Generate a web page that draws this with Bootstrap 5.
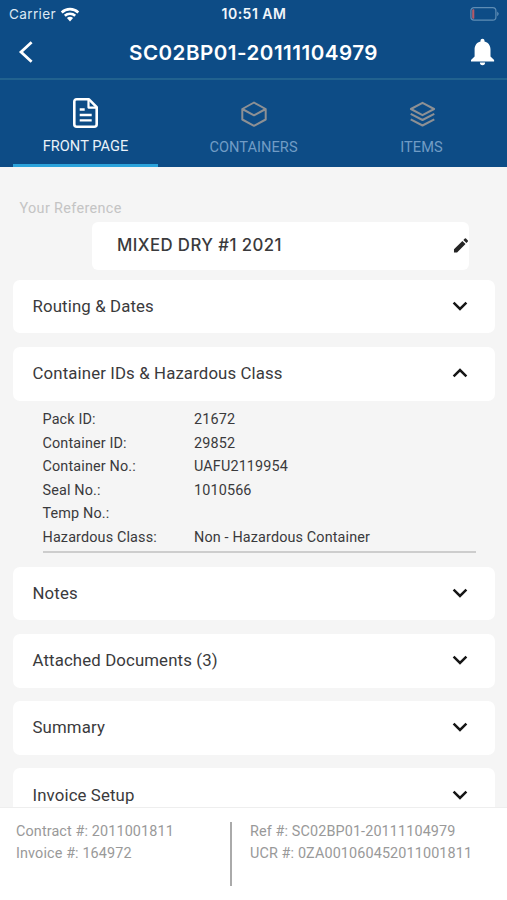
<!DOCTYPE html>
<html lang="en">
<head>
<meta charset="utf-8">
<meta name="viewport" content="width=device-width, initial-scale=1">
<title>SC02BP01-20111104979</title>
<link href="https://cdn.jsdelivr.net/npm/bootstrap@5.3.0/dist/css/bootstrap.min.css" rel="stylesheet">
<style>
  body { font-family: Roboto, "Liberation Sans", sans-serif; color: #3a3a3c; background: #f5f5f5; line-height: 1.2; }
  svg { display: block; flex: none; }
  .screen { height: 900px; }
  .ios { font-family: Inter, "Liberation Sans", sans-serif; }
  .top-area { background: #0d4c86; color: #fff; height: 167px; flex: none; }
  .status-line { height: 28px; padding: 0 8px 0 9px; }
  .status-line > * { flex: 1 1 0; }
  .carrier { font-size: 13.6px; letter-spacing: .35px; color: #dce8f3; }
  .clock { font-size: 14px; font-weight: 600; letter-spacing: .5px; color: #f1f6fa; }
  .title-bar { height: 52px; padding: 0 12px 3px 18px; border-bottom: 2px solid #21628f; }
  .page-title { font-size: 20.6px; font-weight: 600; letter-spacing: .48px; padding: 3px 0 0 3px; }
  .tab-row { height: 87px; padding: 0 13px; }
  .tab-item { width: 145px; padding-top: 17px; border-bottom: 3px solid transparent; font-size: 14.6px; letter-spacing: .05px; color: #719cc5; }
  .tab-item.current { color: #e9f2f9; border-color: #2ba3db; }
  .tab-item svg { height: 32px; margin-bottom: 10px; }
  .tab-item.current svg { margin-bottom: 9px; }
  .content-area { padding: 34px 12.5px 0 13px; min-height: 0; }
  .ref-label { flex: none; font-size: 14.4px; letter-spacing: .35px; color: #c4c4c4; padding-left: 6.5px; height: 20.5px; line-height: 16px; }
  .ref-field { margin: 0 26px 10.3px 79px; height: 48px; padding: 0 0 0 25px; border-radius: 6px; font-size: 16.8px; font-weight: 500; color: #3a3a3c; letter-spacing: .42px; }
  .section-bar { height: 53.6px; margin-bottom: 13.6px; padding: 0 26.5px 1.2px 19.5px; border-radius: 7px; font-size: 16.8px; letter-spacing: .13px; flex: none; }
  .detail-list { margin: -6.2px 19px 14px 29.5px; padding-bottom: 1.3px; border-bottom: 2px solid #cdcdcd; font-size: 14.4px; letter-spacing: .14px; }
  .detail-list > div { height: 23.6px; line-height: 23.6px; }
  .detail-list dt { width: 151.5px; font-weight: 400; }
  .footer-bar { height: 93px; flex: none; padding: 12.5px 15px 0 16px; border-top: 1px solid #eee; font-size: 14.4px; line-height: 22.6px; color: #999; letter-spacing: .12px; }
  .footer-left { width: 214px; }
  .footer-rule { width: 2px; height: 64px; background: #aaa; margin: 1.5px 18px 0 0; }
</style>
</head>
<body>
<svg class="d-none" xmlns="http://www.w3.org/2000/svg">
  <symbol id="chev" viewBox="0 0 16 10"><path d="M1.6 1.6 8 7.9 14.4 1.6" fill="none" stroke="#161616" stroke-width="2.5"/></symbol>
</svg>
<div class="screen d-flex flex-column overflow-hidden">
  <header class="top-area">
    <div class="status-line d-flex align-items-center ios">
      <div class="d-flex align-items-center gap-1"><span class="carrier">Carrier</span>
        <svg width="20" height="15" viewBox="0 0 20 15" fill="none" stroke="#fff" stroke-width="2.6"><path d="M1.7 5.5a12 12 0 0 1 16.6 0M4.8 8.8a7.5 7.5 0 0 1 10.4 0"/><path d="M6.9 11.1a4.5 4.5 0 0 1 6.2 0L10 14.4Z" fill="#fff" stroke="none"/></svg>
      </div>
      <div class="clock text-center">10:51 AM</div>
      <div class="d-flex justify-content-end">
        <svg width="29" height="16" viewBox="0 0 29 16"><rect x=".9" y="1.6" width="25" height="12.6" rx="3.2" fill="none" stroke="#5f8db5" stroke-width="1.2"/><path d="M27.2 5.4q3 2.4 0 4.9Z" fill="#5f8db5"/><path d="M4 3.5v9H3.4q-1 0-1-1V4.5q0-1 1-1Z" fill="#b45b68" stroke="#b45b68" stroke-width=".6"/></svg>
      </div>
    </div>
    <div class="title-bar d-flex align-items-center justify-content-between">
      <svg width="16" height="24" viewBox="0 0 16 24"><path d="M13.6 2.2 3 12l10.6 9.8" fill="none" stroke="#fff" stroke-width="2.8"/></svg>
      <div class="page-title ios">SC02BP01-20111104979</div>
      <svg width="25" height="28" viewBox="0 0 25 28" fill="#fff"><path d="M12.5.8c1.2 0 2 .8 2 2v.8c3.7.9 6 3.9 6 8v6.800l3.600 3.600v1.400H1v-1.400l3.600-3.600v-6.800c0-4.100 2.200-7.100 5.900-8v-.8c0-1.200.8-2 2-2ZM9.900 24.600h5.200a2.600 2.600 0 0 1-5.200 0Z"/></svg>
    </div>
    <nav class="tab-row d-flex justify-content-between">
      <div class="tab-item current d-flex flex-column align-items-center">
        <svg width="28" height="32" viewBox="0 0 28 32" fill="none" stroke="#fff" stroke-width="2.6" stroke-linejoin="round"><path d="M17 2.300H4.800q-2.500 0-2.500 2.500v22.400q0 2.500 2.500 2.500h17.400q2.500 0 2.500-2.500V10.200Z"/><path d="M16.500 2.800v7.800h7.800" stroke-width="2.2"/><path d="M7.700 12.500h5M7.700 18h12M7.700 23.400h12" stroke-width="2.3"/></svg>
        <span>FRONT PAGE</span>
      </div>
      <div class="tab-item d-flex flex-column align-items-center">
        <svg width="28" height="32" viewBox="0 0 28 32" fill="none" stroke="#8d9094" stroke-width="2" stroke-linejoin="round"><path d="M14 5.500 25.700 12v10.500L14 28.800 2.300 22.500V12ZM2.300 12 14 18.300 25.700 12"/></svg>
        <span>CONTAINERS</span>
      </div>
      <div class="tab-item d-flex flex-column align-items-center">
        <svg width="28" height="32" viewBox="0 0 28 32" fill="none" stroke="#8d9094" stroke-width="2" stroke-linejoin="round"><path d="M14.500 5.800 26.100 12 14.500 18.200 2.900 12ZM2.700 16.800 14.500 23l11.800-6.200M2.700 22.300 14.500 28.500l11.800-6.200"/></svg>
        <span>ITEMS</span>
      </div>
    </nav>
  </header>
  <main class="content-area flex-grow-1 overflow-hidden d-flex flex-column">
    <div class="ref-label">Your Reference</div>
    <div class="ref-field bg-white d-flex align-items-center justify-content-between flex-shrink-0"><span class="ios">MIXED DRY #1 2021</span>
      <svg width="16" height="15" viewBox="0 0 17 16" fill="#252525"><path d="M1 12.100 10 3.100l3.300 3.300-9 9H1ZM11 2.100 12.600.6q.6-.5 1.200 0l2 2q.6.600 0 1.200L14.300 5.400Z"/></svg>
    </div>
    <div class="section-bar bg-white d-flex align-items-center justify-content-between"><span>Routing &amp; Dates</span><svg width="16" height="10"><use href="#chev"/></svg></div>
    <div class="section-bar bg-white d-flex align-items-center justify-content-between"><span>Container IDs &amp; Hazardous Class</span><svg width="16" height="10" viewBox="0 0 16 10"><path d="M1.6 8.4 8 2.1l6.4 6.3" fill="none" stroke="#161616" stroke-width="2.5"/></svg></div>
    <dl class="detail-list flex-shrink-0">
      <div class="d-flex"><dt>Pack ID:</dt><dd class="mb-0">21672</dd></div>
      <div class="d-flex"><dt>Container ID:</dt><dd class="mb-0">29852</dd></div>
      <div class="d-flex"><dt>Container No.:</dt><dd class="mb-0">UAFU2119954</dd></div>
      <div class="d-flex"><dt>Seal No.:</dt><dd class="mb-0">1010566</dd></div>
      <div class="d-flex"><dt>Temp No.:</dt><dd class="mb-0"></dd></div>
      <div class="d-flex"><dt>Hazardous Class:</dt><dd class="mb-0">Non - Hazardous Container</dd></div>
    </dl>
    <div class="section-bar bg-white d-flex align-items-center justify-content-between"><span>Notes</span><svg width="16" height="10"><use href="#chev"/></svg></div>
    <div class="section-bar bg-white d-flex align-items-center justify-content-between"><span>Attached Documents (3)</span><svg width="16" height="10"><use href="#chev"/></svg></div>
    <div class="section-bar bg-white d-flex align-items-center justify-content-between"><span>Summary</span><svg width="16" height="10"><use href="#chev"/></svg></div>
    <div class="section-bar bg-white d-flex align-items-center justify-content-between"><span>Invoice Setup</span><svg width="16" height="10"><use href="#chev"/></svg></div>
  </main>
  <footer class="footer-bar bg-white d-flex">
    <div class="footer-left"><div>Contract #: 2011001811</div><div>Invoice #: 164972</div></div>
    <div class="footer-rule"></div>
    <div><div>Ref #: SC02BP01-20111104979</div><div>UCR #: 0ZA001060452011001811</div></div>
  </footer>
</div>
<script src="https://cdn.jsdelivr.net/npm/bootstrap@5.3.0/dist/js/bootstrap.bundle.min.js"></script>
</body>
</html>
